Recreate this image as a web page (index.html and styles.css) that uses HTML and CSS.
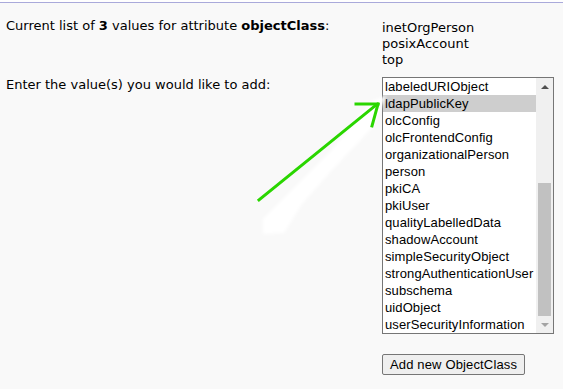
FILE: index.html
```html
<!DOCTYPE html>
<html>
<head>
    <title>Add ObjectClass</title>
    <link rel="stylesheet" href="styles.css">
</head>
<body>
    <div class="page">
        <div class="row first">
            <div class="label">Current list of <b>3</b> values for attribute <b>objectClass</b>:</div>
            <div class="values">
                <div>inetOrgPerson</div>
                <div>posixAccount</div>
                <div>top</div>
            </div>
        </div>
        <div class="row second">
            <div class="label">Enter the value(s) you would like to add:</div>
            <div class="field">
                <div class="listbox">
                    <div class="options">
                        <div class="option">labeledURIObject</div>
                        <div class="option selected">ldapPublicKey</div>
                        <div class="option">olcConfig</div>
                        <div class="option">olcFrontendConfig</div>
                        <div class="option">organizationalPerson</div>
                        <div class="option">person</div>
                        <div class="option">pkiCA</div>
                        <div class="option">pkiUser</div>
                        <div class="option">qualityLabelledData</div>
                        <div class="option">shadowAccount</div>
                        <div class="option">simpleSecurityObject</div>
                        <div class="option">strongAuthenticationUser</div>
                        <div class="option">subschema</div>
                        <div class="option">uidObject</div>
                        <div class="option">userSecurityInformation</div>
                    </div>
                    <div class="scrollbar">
                        <div class="sb-button"><span class="arrow-up"></span></div>
                        <div class="track"><div class="thumb"></div></div>
                        <div class="sb-button"><span class="arrow-down"></span></div>
                    </div>
                </div>
                <button class="add-button">Add new ObjectClass</button>
            </div>
        </div>

        <!-- hand drawn pointer on the screenshot -->
        <svg class="pointer" width="577" height="389" viewBox="0 0 577 389">
            <defs>
                <filter id="soft"><feGaussianBlur stdDeviation="1.5"/></filter>
            </defs>
            <polygon points="263,234 263,219 292,190 330,152 358,118 372,101 386,96 372,128 332,170 302,204 284,233" fill="#ffffff" filter="url(#soft)"/>
            <g stroke="#2ad600" stroke-width="3" stroke-linecap="square" fill="none">
                <line x1="259" y1="200" x2="376" y2="105"/>
                <line x1="356" y1="104" x2="378" y2="104"/>
                <line x1="378" y1="104" x2="372" y2="126"/>
            </g>
        </svg>
    </div>
</body>
</html>
```

FILE: styles.css
```css
body {
    margin: 0;
    background-color: #ffffff;
    font-family: "DejaVu Sans", Verdana, sans-serif;
    font-size: 13px;
    color: #000000;
}

.page {
    position: relative;
    width: 563px;
    height: 386px;
    margin-top: 2px;
    border-top: 1px solid #aaaadb;
    background-color: #f9f9f9;
}

.row {
    display: grid;
    grid-template-columns: 376px auto;
    padding-left: 6px;
}

.row.first {
    padding-top: 13px;
}

.row.second {
    margin-top: 7px;
}

.label {
    line-height: 16px;
    padding-top: 2px;
}

.values {
    line-height: 16px;
    padding-top: 4px;
}

.field {
    padding-top: 2px;
}

.listbox {
    display: flex;
    width: 170px;
    height: 255px;
    border: 1px solid #767676;
    background-color: #ffffff;
}

.options {
    flex: 1;
    font-family: "Liberation Sans", Arial, sans-serif;
    font-size: 13px;
    letter-spacing: 0.1px;
}

.option {
    height: 17px;
    line-height: 17px;
    padding-left: 2px;
    white-space: nowrap;
    overflow: hidden;
}

.option.selected {
    background-color: #cecece;
}

.scrollbar {
    width: 17px;
    display: flex;
    flex-direction: column;
    background-color: #f0f0f0;
}

.sb-button {
    height: 17px;
    display: flex;
    align-items: center;
    justify-content: center;
}

.arrow-up {
    width: 0;
    height: 0;
    border-left: 4px solid transparent;
    border-right: 4px solid transparent;
    border-bottom: 4px solid #505050;
}

.arrow-down {
    width: 0;
    height: 0;
    border-left: 4px solid transparent;
    border-right: 4px solid transparent;
    border-top: 4px solid #a3a3a3;
}

.track {
    flex: 1;
    display: flex;
    flex-direction: column;
    justify-content: flex-end;
}

.thumb {
    height: 133px;
    margin: 0 2px;
    background-color: #c1c1c1;
}

.add-button {
    display: block;
    margin-top: 20px;
    height: 21px;
    padding: 0 7px;
    font-family: "Liberation Sans", Arial, sans-serif;
    font-size: 13px;
    letter-spacing: 0.15px;
    color: #000000;
    background-color: #efefef;
    border: 1px solid #767676;
    border-radius: 2px;
}

.pointer {
    position: absolute;
    left: 0;
    top: -3px;
    pointer-events: none;
}
```
